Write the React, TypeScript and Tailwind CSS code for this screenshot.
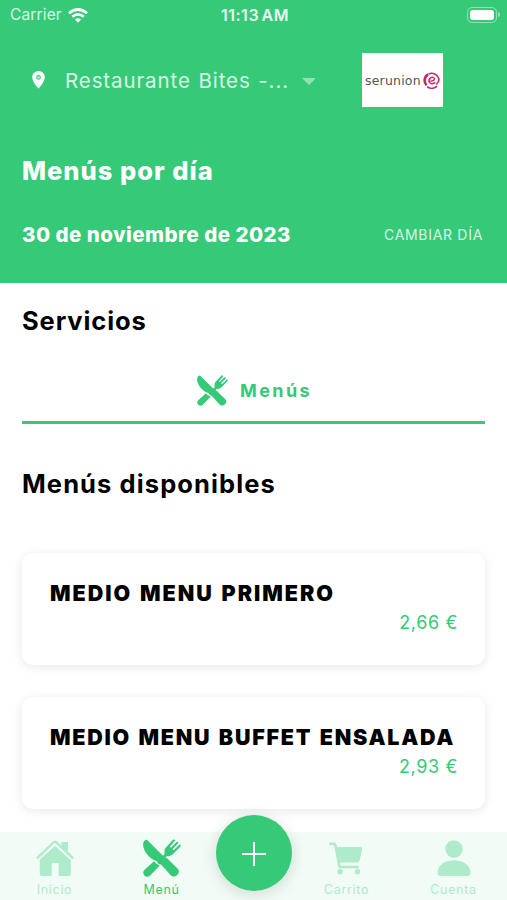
import type { ReactNode } from "react";

interface MenuItem {
  name: string;
  price: string;
  nameClass: string;
}

const MENUS: MenuItem[] = [
  { name: "MEDIO MENU PRIMERO", price: "2,66 €", nameClass: "tracking-[2px]" },
  { name: "MEDIO MENU BUFFET ENSALADA", price: "2,93 €", nameClass: "tracking-[1.75px]" },
];

function CutleryIcon({ className = "" }: { className?: string }) {
  return (
    <svg viewBox="0 0 38 38" className={className} fill="currentColor">
      {/* Fork */}
      <path d="M18.5 18.5 L21.8 14.8 C20.9 11.8 21.5 9.8 24 7.2 L30 .7 Q31.5 -.2 32.2 1.5 L27 7.6 Q27 8.8 28.1 8.4 L33.6 2.9 Q35.2 2.6 35.2 4.3 L29.8 9.8 Q29.6 11.1 30.9 11 L36.5 5.5 Q38.2 5.7 37.5 7.4 L31.6 13.5 C28.9 16.6 26.5 17.5 24 17 L20.5 20.5 Z" />
      <path d="M11 22.3 Q12.8 24.9 16.8 26.4 L7.2 36.6 Q4 39.2 1.2 36.3 Q-1 33.5 1.8 30.6 Z" />
      {/* Knife */}
      <path d="M4 .8 L20.7 17.5 L24.4 19.6 L35 30 Q37.2 32.7 34.3 36 Q31 38.8 28 36.4 L18 25.4 Q15 25.6 14 22.2 C5.6 19.9 -1.6 9.2 .4 3.5 Q1.3 .2 4 .8 Z" />
    </svg>
  );
}

function HomeIcon() {
  return (
    <svg viewBox="0 0 38 37" className="h-[37px] w-[38px]" fill="currentColor">
      <path d="M25.5 7 V2 H32 V13 Z" />
      <path d="M.9 18.4 L17.8 2.2 Q19 1.2 20.2 2.2 L37.1 18.4" fill="none" stroke="currentColor" strokeWidth="2.3" />
      <path d="M19 5.8 L34.8 20.2 V33.8 Q34.8 36 32.6 36 H22.7 V24.2 Q22.7 23 21.5 23 H16.9 Q15.7 23 15.7 24.2 V36 H6 Q3.8 36 3.8 33.8 V19.6 Z" />
    </svg>
  );
}

function CartIcon() {
  return (
    <svg viewBox="0 0 35 33" className="mr-[3px] h-[33px] w-[35px]" fill="currentColor">
      <path d="M1.2 1.8 H6 Q7 1.8 7.3 3 L11.6 25 H30.6" fill="none" stroke="currentColor" strokeWidth="2.6" />
      <path d="M8 5 H32.5 Q34.5 5 34.2 7 L31.6 18.5 Q31.2 20.5 29.4 20.5 H10.7 Z" />
      <circle cx="12" cy="29.7" r="2.7" />
      <circle cx="29.5" cy="29.7" r="2.7" />
    </svg>
  );
}

function UserIcon() {
  return (
    <svg viewBox="0 0 34 37" className="h-[37px] w-[34px]" fill="currentColor">
      <circle cx="17" cy="9" r="8.7" />
      <path d="M.5 33 C.5 25 8 20.2 17 20.2 S33.5 25 33.5 33 Q33.5 36 30.5 36 H3.5 Q.5 36 .5 33 Z" />
    </svg>
  );
}

function StatusBar() {
  return (
    <div className="flex h-[29px] items-center justify-between pl-[10px] pr-[7px] text-[15.5px]">
      <div className="flex w-[190px] items-center gap-[6px] pt-px">
        <span className="tracking-[0.15px] text-white/80">Carrier</span>
        <svg viewBox="0 0 20 15" className="h-[15px] w-5" fill="none" stroke="currentColor" strokeWidth="2.7">
          <path d="M1 5.2 Q10 -2.2 19 5.2" />
          <path d="M4.2 8.8 Q10 4 15.8 8.8" />
          <path d="M6.9 11.6 Q10 9 13.1 11.6 L10 14.7 Z" fill="currentColor" stroke="none" />
        </svg>
      </div>
      <span className="whitespace-nowrap pt-px text-[16px] font-semibold tracking-[0.5px] [word-spacing:-2px] text-white/90">11:13 AM</span>
      <div className="flex w-[190px] items-center justify-end gap-px">
        <div className="h-4 w-[30px] rounded-[5px] border border-white/45 p-[2px]">
          <div className="h-full rounded-[3px] bg-white" />
        </div>
        <div className="h-[5px] w-[2px] rounded-r bg-white/45" />
      </div>
    </div>
  );
}

function BrandLogo() {
  return (
    <div className="flex h-[54px] w-[81px] items-center justify-center bg-white pt-px">
      <span className="w-[57px] whitespace-nowrap font-['DejaVu_Sans',sans-serif] text-[12.5px] leading-4 tracking-[0.2px] text-[#555]">serunion</span>
      <svg viewBox="0 0 18 18" className="ml-px size-[17px] shrink-0" fill="none" stroke="#c42b66">
        <path d="M14.8 15 A8 8 0 0 1 4.5 15.6" strokeWidth="1.8" />
        <path d="M6 2 A8 8 0 0 1 16.8 7 Q17.3 10.5 14 13" strokeWidth="1.7" />
        <path d="M3.8 14 A7.2 7.2 0 0 1 5.5 2.6" strokeWidth="2.8" />
        <path d="M7.8 9.8 Q12.4 9.4 12.2 7.2 Q11.3 4.8 8.4 6 Q5.4 8 6.8 11 Q9 14 13 11" strokeWidth="1.6" />
      </svg>
    </div>
  );
}

function Header() {
  return (
    <header className="h-[283px] shrink-0 bg-[#35c978] text-white">
      <StatusBar />
      <div className="flex items-center pl-[32px] pt-6">
        <svg viewBox="0 0 13 18" className="h-[18px] w-[13px]">
          <path d="M6.5 0 A6.3 6.3 0 0 0 .2 6.3 C.2 11 6.5 17.7 6.5 17.7 S12.8 11 12.8 6.3 A6.3 6.3 0 0 0 6.5 0 Z" fill="white" />
          <circle cx="6.5" cy="6.3" r="2" fill="#a9eac6" stroke="#35c978" />
        </svg>
        <span className="ml-[20px] w-[225px] whitespace-nowrap pt-[2px] text-[20.5px] tracking-[0.9px] [word-spacing:1px] text-white/80">
          Restaurante Bites -...
        </span>
        <div className="ml-[12px] mt-[2px] border-x-[7px] border-t-[7px] border-x-transparent border-t-white/45" />
        <div className="ml-[46px]">
          <BrandLogo />
        </div>
      </div>
      <h1 className="mt-[46px] pl-[22px] text-[25.5px] font-extrabold leading-9 tracking-[1px]">Menús por día</h1>
      <div className="mt-[30px] flex items-center justify-between pl-[22px] pr-[24px]">
        <span className="text-[20.5px] font-extrabold leading-8 tracking-[0.45px]">30 de noviembre de 2023</span>
        <span className="pb-[2px] text-[14px] tracking-[0.7px] text-white/80">CAMBIAR DÍA</span>
      </div>
    </header>
  );
}

function MenuCard({ name, price, nameClass }: MenuItem) {
  return (
    <article className="h-28 rounded-[11px] bg-white px-7 pt-[25px] shadow-[0_2px_12px_rgba(0,0,0,0.09)]">
      <h3 className={`whitespace-nowrap text-[21.5px] font-black leading-[31px] [word-spacing:1.5px] ${nameClass}`}>{name}</h3>
      <p className="-mr-px -mt-px text-right text-[18px] leading-[30px] tracking-[0.6px] text-[#35c978]">{price}</p>
    </article>
  );
}

function NavItem({ label, active = false, children }: { label: string; active?: boolean; children: ReactNode }) {
  return (
    <div className={`flex w-[107px] flex-col items-center ${active ? "text-[#35c978]" : "text-[#aeebca]"}`}>
      <div className="flex h-[40px] items-center">{children}</div>
      <span className="mt-[3px] text-[12.5px] leading-[17px] tracking-[0.7px]">{label}</span>
    </div>
  );
}

function BottomNav() {
  return (
    <nav className="relative flex h-[68px] shrink-0 justify-between bg-[#f1fcf6] pl-px pt-[6px]">
      <div className="flex">
        <NavItem label="Inicio">
          <HomeIcon />
        </NavItem>
        <NavItem label="Menú" active>
          <CutleryIcon className="size-[38px]" />
        </NavItem>
      </div>
      <div className="flex">
        <NavItem label="Carrito">
          <CartIcon />
        </NavItem>
        <NavItem label="Cuenta">
          <UserIcon />
        </NavItem>
      </div>
      <button className="absolute -top-[17px] left-[216px] flex size-[76px] items-center justify-center rounded-full bg-[#35c978] text-white shadow-[0_3px_16px_rgba(0,0,0,0.14)]">
        <svg viewBox="0 0 24 24" className="mt-px size-6" stroke="currentColor" strokeWidth="2">
          <path d="M12 0 V24 M0 12 H24" />
        </svg>
      </button>
    </nav>
  );
}

export default function App() {
  return (
    <div className="flex h-[900px] w-[507px] flex-col overflow-hidden bg-white font-['Inter',sans-serif] text-black">
      <Header />
      <main className="min-h-0 flex-1 px-[22px] pt-5">
        <h2 className="text-[25.5px] font-bold leading-9 tracking-[0.9px]">Servicios</h2>
        <div className="mt-[21px] flex h-[64px] items-center justify-center gap-3 border-b-[3px] border-[#35c978] pl-[2px] text-[#35c978]">
          <CutleryIcon className="size-[31px]" />
          <span className="text-[18px] font-bold tracking-[2.4px]">Menús</span>
        </div>
        <h2 className="mt-[42px] text-[25.5px] font-bold leading-9 tracking-[1.1px]">Menús disponibles</h2>
        <div className="mt-[51px] flex flex-col gap-8">
          {MENUS.map((menu) => (
            <MenuCard key={menu.name} {...menu} />
          ))}
        </div>
      </main>
      <BottomNav />
    </div>
  );
}
